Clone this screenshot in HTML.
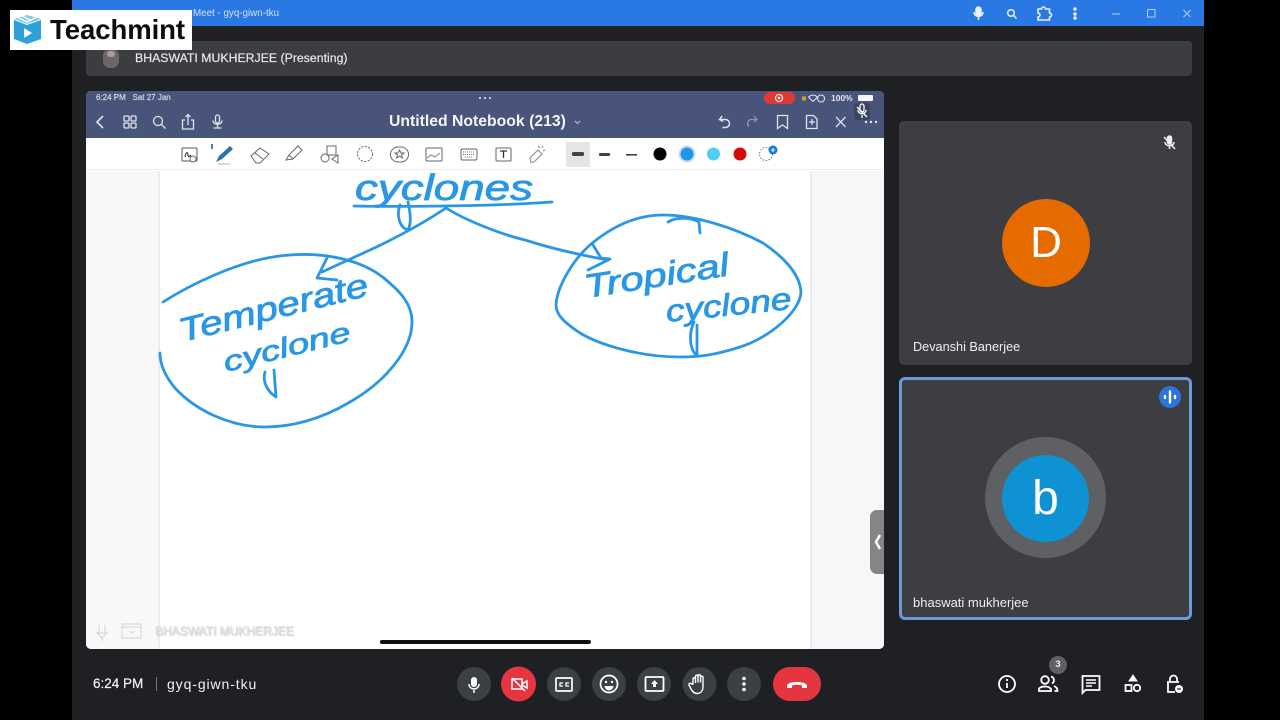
<!DOCTYPE html>
<html><head><meta charset="utf-8"><style>
html,body{margin:0;padding:0;background:#000;width:1280px;height:720px;overflow:hidden}
*{box-sizing:border-box}
body{font-family:"Liberation Sans",sans-serif;position:relative}
.a{position:absolute}
svg{position:absolute;overflow:visible}
</style></head><body>
<div class="a" style="left:72px;top:0;width:1132px;height:720px;background:#1f2023"></div>
<div class="a" style="left:72px;top:0;width:1132px;height:26px;background:#2a78e4"></div>
<div class="a" style="left:193px;top:8px;font-size:9.8px;color:#cfe2fb;white-space:nowrap">Meet - gyq-giwn-tku</div>
<div class="a" style="left:86px;top:41px;width:1106px;height:35px;background:#3b3d40;border-radius:4px"></div>
<div class="a" style="left:103px;top:49px;width:16px;height:19px;background:#6d6668;border-radius:7px"></div>
<div class="a" style="left:107px;top:51px;width:8px;height:6px;background:#a89a9c;border-radius:4px"></div>
<div class="a" style="left:135px;top:51px;font-size:12.3px;font-weight:400;color:#e8e8e8;white-space:nowrap;-webkit-text-stroke:.2px #e8e8e8">BHASWATI MUKHERJEE (Presenting)</div>

<svg style="left:0;top:0" width="1280" height="26" fill="none" stroke="#e9f1fd" stroke-width="1.5">
<rect x="976" y="7" width="5" height="9" rx="2.5" fill="#e9f1fd"/><path d="M974 12c0 6 9 6 9 0M978.500 16v4"/>
<circle cx="1011" cy="13" r="3.300"/><path d="M1013.500 15.500l3 3"/>
<path d="M1038 9h3.500a2 2 0 0 1 4 0h4v4a2 2 0 0 1 0 4v3h-11.500v-3a2 2 0 0 0 0-4z" stroke-width="1.600"/>
<circle cx="1075" cy="9" r="1" fill="#e9f1fd"/><circle cx="1075" cy="14" r="1" fill="#e9f1fd"/><circle cx="1075" cy="18" r="1" fill="#e9f1fd"/>
<path d="M1112 14h8M1147.500 9.500h7.500v7.500h-7.500zM1183.500 10l7 7M1190.500 10l-7 7" stroke="#b7d2f6" stroke-width="1"/>
</svg>

<!-- slide -->
<div class="a" style="left:86px;top:91px;width:798px;height:558px;background:#fff;border-radius:5px;overflow:hidden">
  <div class="a" style="left:0;top:0;width:798px;height:47px;background:#49547a"></div>
  <div class="a" style="left:0;top:47px;width:798px;height:32px;background:#fff;border-bottom:1px solid #efeff1"></div>
  <div class="a" style="left:0;top:80px;width:74px;height:478px;background:#f9f8f9;border-right:2px solid #ecebee"></div>
  <div class="a" style="left:724px;top:80px;width:74px;height:478px;background:#f8f6f8;border-left:2px solid #ecebee"></div>
  <div class="a" style="left:10px;top:2px;font-size:8px;font-weight:400;color:#d3d7e2;white-space:nowrap;line-height:10px;-webkit-text-stroke:.2px #d3d7e2">6:24 PM&nbsp;&nbsp;&nbsp;Sat 27 Jan</div>
  <div class="a" style="left:303px;top:22px;font-size:16px;font-weight:700;color:#f4f5f8;white-space:nowrap;line-height:18px;transform:scaleX(.985);transform-origin:left">Untitled Notebook (213)</div>
  <div class="a" style="left:745px;top:2px;font-size:8.5px;font-weight:700;color:#e3e6ee;line-height:10px">100%</div>
  <div class="a" style="left:678px;top:1px;width:31px;height:12px;background:#e13a36;border-radius:6px"></div>
  <div class="a" style="left:772px;top:4px;width:15px;height:6px;background:#f5f5f8;border-radius:1px"></div>
  <div class="a" style="left:294px;top:549px;width:211px;height:4px;background:#111;border-radius:2px"></div>
  <div class="a" style="left:69px;top:533px;font-size:12px;color:#e6e6e6;white-space:nowrap;font-weight:400;-webkit-text-stroke:.5px #dcdcdc;text-shadow:1px 1px 1px #ccc">BHASWATI MUKHERJEE</div>
  <div class="a" style="left:784px;top:419px;width:14px;height:64px;background:#858585;border-radius:7px 0 0 7px"></div>
</div>

<svg style="left:0;top:0" width="1280" height="720" fill="none">
<!-- slide header icons -->
<g stroke="#dfe3ec" stroke-width="1.300">
<path d="M103 116l-6 6 6 6" stroke-width="1.600"/>
<rect x="124" y="116" width="5" height="5" rx="1"/><rect x="131" y="116" width="5" height="5" rx="1"/><rect x="124" y="123" width="5" height="5" rx="1"/><rect x="131" y="123" width="5" height="5" rx="1"/>
<circle cx="158" cy="121" r="4.500"/><path d="M161.500 124.500l4 4"/>
<path d="M185 120h-2.500v9h11v-9h-2.500M188 125v-10M185.500 117l2.500-2.500 2.500 2.500"/>
<rect x="215.500" y="115" width="4" height="8" rx="2"/><path d="M213 120.500c0 5 9 5 9 0M217.500 124.500v3M213.500 128h8"/>
<path d="M575 121l2.500 2.500 2.500-2.500" stroke="#aab1c6"/>
<path d="M722 116l-2.500 3.500 3.500 2M719.500 119.500h6a4 4 0 0 1 0 8h-3" stroke-width="1.500"/>
<path d="M754 116l3 3.500-3 2.500M757 119.500h-5a4 4 0 0 0-3 7" stroke="#8e97b2"/>
<path d="M777.500 115.500h10v13l-5-3.500-5 3.500z"/>
<path d="M806.500 115.500h7l3.500 3.500v9.500h-10.500zM812 119v6M809 122h6"/>
<path d="M836 117l9.500 10M845.500 117l-9.500 10"/>
</g>
<g fill="#e5e8ef"><circle cx="866" cy="122" r="1.200"/><circle cx="871" cy="122" r="1.200"/><circle cx="876" cy="122" r="1.200"/>
<circle cx="480" cy="98" r="1"/><circle cx="485" cy="98" r="1"/><circle cx="490" cy="98" r="1"/></g>
<circle cx="779" cy="98" r="3.500" stroke="#fff" stroke-width="1"/><circle cx="779" cy="98" r="1.300" fill="#fff"/>
<rect x="802" y="96.500" width="4" height="4" fill="#d99a2b"/>
<path d="M808.500 97c3-2.500 6-2.500 9 0l-4.500 4.500zM821 95a3.500 3.500 0 1 0 .1 0z" stroke="#e3e6ee" stroke-width="1"/>
<rect x="854" y="103" width="16" height="17" rx="3" fill="#3c4560"/>
<g stroke="#fff" stroke-width="1.300"><path d="M857 107l10 10"/><rect x="860" y="104" width="4" height="8" rx="2"/><path d="M858 110c0 5 8 5 8 0M862 115v3"/></g>

<!-- toolbar icons -->
<g stroke="#666" stroke-width="1">
<rect x="182" y="148" width="15" height="13" rx="1" stroke="#555"/><path d="M185 157c1-6 3-5 3-2s2 1 3 0" stroke="#222"/><circle cx="193" cy="159" r="3" fill="#fff"/>
<path d="M251 156l9-8 9 6-9 9h-4zM255 153l8 6"/>
<path d="M286 160l3-5 9-9 4 4-9 9zM289 155l4 4"/>
<rect x="327" y="146" width="9" height="9"/><circle cx="325" cy="158" r="4"/><path d="M338 155l-6 4 6 4z"/>
<circle cx="365" cy="154" r="7.500" stroke-dasharray="2 1.500"/>
<rect x="390.500" y="147" width="18" height="15" rx="7.500"/><path d="M399.500 150l1.500 3h3l-2.500 2 1 3-3-1.800-3 1.800 1-3-2.500-2h3z"/>
<rect x="426" y="148" width="16" height="13" rx="1"/><path d="M427 158l4-3 4 2 5-4" stroke="#888"/>
<rect x="461" y="149" width="16" height="11" rx="1.500"/><path d="M463 152h12M463 154.500h12M465 157h8" stroke="#777" stroke-dasharray="1 1"/>
<rect x="496" y="148" width="15" height="13" rx="1"/><path d="M500 151h7M503.500 151v7" stroke="#333" stroke-width="1.300"/>
<path d="M530 158l8-8 4 4-8 8-3 .5zM538 146l2 2M543 146l-1 2M545 150l-2 1" stroke="#888"/>
</g>
<path d="M216 162l3-6 11-10 3 3-11 10z" fill="#2e6fae"/><path d="M218 164h12" stroke="#9db8d4"/>
<path d="M212 144l0 5" stroke="#3b82d6" stroke-width="2"/>
<rect x="566" y="142" width="24" height="25" fill="#e5e5e7"/>
<rect x="572" y="152" width="12" height="4" rx="1.500" fill="#444"/>
<rect x="599" y="153" width="11" height="3" rx="1" fill="#444"/>
<rect x="626" y="154" width="11" height="1.600" fill="#444"/>
<circle cx="660" cy="154" r="6.500" fill="#000"/>
<circle cx="687" cy="154" r="8.500" fill="#c8dbec"/><circle cx="687" cy="154" r="6.500" fill="#2196e8"/>
<circle cx="713.500" cy="154" r="6.500" fill="#4fd0f2"/>
<circle cx="740" cy="154" r="6.500" fill="#d70a0a"/>
<circle cx="766" cy="154" r="6.500" stroke="#777" stroke-dasharray="1.500 1.500"/>
<circle cx="773" cy="150" r="4.500" fill="#1878e0"/><path d="M771 150h4M773 148v4" stroke="#fff"/>

<!-- drawing strokes -->
<g stroke="#2a97e6" stroke-width="2.800" stroke-linecap="round" stroke-linejoin="round">
<path d="M354 206C400 207 500 206 552 202"/>
<path d="M446 208C425 222 400 236 370 250C350 259 335 266 322 272M327 258L317 278L337 280"/>
<path d="M446 208C465 220 500 234 525 240C550 248 580 255 608 260M588 270L610 259L600 258M593 245L601 258"/>
<path d="M163 302C185 288 240 258 290 255C330 252 365 262 385 279C402 293 412 305 412 322C412 350 385 382 350 402C320 420 290 427 265 427C230 427 195 410 175 388C165 376 160 365 160 353"/>
<path d="M590 245C610 228 635 215 663 215C695 215 735 228 763 243C785 258 800 275 801 292C800 312 770 337 740 347C715 355 700 357 680 357C640 357 600 345 580 333C565 323 556 315 556 305C557 285 575 258 590 245Z"/>
<path d="M668 222C678 216 692 218 699 222L700 233"/>
<path d="M400 205C396 216 400 228 408 230C412 222 410 212 408 202"/>
<path d="M694 322C688 335 690 350 697 356L697 325"/>
<path d="M265 372C262 382 268 392 276 397L274 370"/>
</g>
<g fill="#2a97e6" stroke="#2a97e6" stroke-width=".8" font-family="'Liberation Sans',sans-serif" font-style="italic">
<text x="355" y="200" font-size="36" textLength="178" lengthAdjust="spacingAndGlyphs">cyclones</text>
<text transform="translate(182 342) rotate(-14)" font-size="33" textLength="194" lengthAdjust="spacingAndGlyphs">Temperate</text>
<text transform="translate(226 372) rotate(-14)" font-size="28" textLength="130" lengthAdjust="spacingAndGlyphs">cyclone</text>
<text transform="translate(586 298) rotate(-9)" font-size="33" textLength="146" lengthAdjust="spacingAndGlyphs">Tropical</text>
<text transform="translate(667 322) rotate(-6)" font-size="31" textLength="126" lengthAdjust="spacingAndGlyphs">cyclone</text>
</g>
<path d="M880 535l-4 7 4 7" stroke="#fff" stroke-width="2.500"/>
<g stroke="#d2d2d2"><path d="M99 625v8M105 625v8M97 633h10l-5 5zM102 638v3"/><rect x="122" y="624" width="19" height="14"/><path d="M122 627h19M129 631l2.500 2 2.500-2"/></g>
</svg>

<!-- tiles -->
<div class="a" style="left:899px;top:121px;width:293px;height:244px;background:#3c3e41;border-radius:5px"></div>
<div class="a" style="left:1002px;top:199px;width:88px;height:88px;background:#e56a00;border-radius:50%;color:#fff;font-size:44px;line-height:88px;text-align:center">D</div>
<div class="a" style="left:913px;top:340px;font-size:12.700px;color:#eee;white-space:nowrap">Devanshi Banerjee</div>
<div class="a" style="left:899px;top:377px;width:293px;height:243px;background:#3c3e41;border:3px solid #6d98dc;border-radius:6px"></div>
<div class="a" style="left:985px;top:437px;width:121px;height:121px;background:#5f6063;border-radius:50%"></div>
<div class="a" style="left:1002px;top:455px;width:87px;height:87px;background:#0f92d4;border-radius:50%;color:#fff;font-size:48px;line-height:87px;text-align:center">b</div>
<div class="a" style="left:913px;top:595px;font-size:13px;color:#eee;white-space:nowrap">bhaswati mukherjee</div>

<svg style="left:0;top:0" width="1280" height="720" fill="none">
<g stroke="#f0f0f0" stroke-width="1.500"><path d="M1164 137l11 12"/><rect x="1167.500" y="136" width="4" height="8" rx="2" fill="#f0f0f0"/><path d="M1165 142c0 5 9 5 9 0M1169.500 146v3"/></g>
<circle cx="1170" cy="397" r="11" fill="#2b74dc"/>
<g stroke="#fff" stroke-width="2.400" stroke-linecap="round"><path d="M1165 396v2M1170 391.500v11M1175 396v2"/></g>

<!-- bottom bar -->
<g fill="#3c4043"><circle cx="474" cy="684" r="17"/><circle cx="564" cy="684" r="17"/><circle cx="609" cy="684" r="17"/><circle cx="654" cy="684" r="17"/><circle cx="699.500" cy="684" r="17"/><circle cx="744" cy="684" r="17"/></g>
<circle cx="518.500" cy="684" r="17.500" fill="#e5353f"/>
<rect x="773" y="667" width="48" height="34" rx="17" fill="#e5353f"/>
<rect x="471" y="677" width="6" height="10" rx="3" fill="#fff"/><path d="M469 684c0 6.500 10 6.500 10 0M474 690v3" stroke="#fff" stroke-width="1.500"/>
<g stroke="#fff" stroke-width="1.500"><path d="M512 678l13 13M512 679h10v10h-10zM522 684l5-3v7l-5-3"/></g>
<rect x="556" y="678" width="16" height="13" rx="1" stroke="#fff" stroke-width="1.700"/><path d="M563 683h-3v3h3M569 683h-3v3h3" stroke="#fff" stroke-width="1.300"/>
<circle cx="609" cy="684" r="8.500" stroke="#fff" stroke-width="1.700"/><circle cx="606" cy="682" r="1.200" fill="#fff"/><circle cx="612" cy="682" r="1.200" fill="#fff"/><path d="M604.500 686h9a4.500 4.500 0 0 1-9 0z" fill="#fff"/>
<rect x="645.500" y="677" width="18" height="14" rx="1" stroke="#fff" stroke-width="1.800"/><path d="M654.500 680l3.500 4h-2v3h-3v-3h-2z" fill="#fff"/>
<path d="M693 684v-5a1.200 1.200 0 0 1 2.500 0v4-6.500a1.200 1.200 0 0 1 2.500 0v6-6.500a1.200 1.200 0 0 1 2.500 0v6.500-5a1.200 1.200 0 0 1 2.500 0v9c0 4-2 7-6 7-3 0-4.500-2-6-4.500l-2-4c-.7-1.500 1.500-2.500 2.500-1z" stroke="#fff" stroke-width="1.400"/>
<g fill="#fff"><circle cx="744" cy="678.500" r="1.800"/><circle cx="744" cy="684" r="1.800"/><circle cx="744" cy="689.500" r="1.800"/></g>
<path d="M787 686c0-5.500 20-5.500 20 0v2h-5v-2.500c-3-1-7-1-10 0v2.500h-5z" fill="#fff"/>
<circle cx="1007" cy="684" r="8" stroke="#fff" stroke-width="1.800"/><path d="M1007 683v5" stroke="#fff" stroke-width="1.800"/><circle cx="1007" cy="680" r="1.100" fill="#fff"/>
<circle cx="1045" cy="680" r="3.800" stroke="#fff" stroke-width="1.800"/><path d="M1039 691v-2c0-2.500 9-4 12 0v2zM1051 676.500a3.800 3.800 0 0 1 1 7M1054 686c2 1 3.500 2 3.500 5h-3" stroke="#fff" stroke-width="1.800"/>
<circle cx="1058" cy="665" r="9" fill="#5f6063"/>
<path d="M1082.500 676h17v14h-14l-3 3z" stroke="#fff" stroke-width="1.800"/><path d="M1086 680h10M1086 683h10M1086 686h6" stroke="#fff" stroke-width="1.400"/>
<path d="M1133 675l4 6h-8z" fill="#fff" stroke="#fff"/><rect x="1125.500" y="685" width="6" height="6" stroke="#fff" stroke-width="1.800"/><circle cx="1137" cy="688" r="3.200" stroke="#fff" stroke-width="1.800"/>
<path d="M1179 682h-11v10h7M1170 682v-3a3.500 3.500 0 0 1 7 0v3" stroke="#fff" stroke-width="1.800"/><circle cx="1179" cy="689" r="4" fill="#fff"/><path d="M1177 689h4" stroke="#1f2023" stroke-width="1.200"/>
</svg>
<div class="a" style="left:93px;top:676px;font-size:13.500px;font-weight:400;color:#f2f2f2;white-space:nowrap;-webkit-text-stroke:.2px #f2f2f2">6:24 PM</div>
<div class="a" style="left:156px;top:677px;width:1px;height:14px;background:#777"></div>
<div class="a" style="left:167px;top:676px;font-size:14px;letter-spacing:.9px;color:#f2f2f2;white-space:nowrap">gyq-giwn-tku</div>
<div class="a" style="left:1049px;top:659px;width:18px;text-align:center;font-size:9.500px;font-weight:700;color:#eee">3</div>

<!-- logo -->
<div class="a" style="left:10px;top:10px;width:182px;height:40px;background:#fff"></div>
<svg style="left:0;top:0" width="200" height="60">
<path d="M14 20l13 5 14-5v19l-14 5-13-5z" fill="#2d9fd9"/>
<path d="M14 19l13-4 14 4-14 5z" fill="#7fc9ea"/>
<path d="M17 17l10 5M21 15.500l10 5M37 17l-10 5" stroke="#fff" stroke-width="1.300"/>
<path d="M24 28l8 5-8 5z" fill="#fff"/>
</svg>
<div class="a" style="left:50px;top:14px;font-size:27.500px;line-height:32px;font-weight:700;color:#0c0c0c;white-space:nowrap;letter-spacing:-.05px">Teachmint</div>
</body></html>
